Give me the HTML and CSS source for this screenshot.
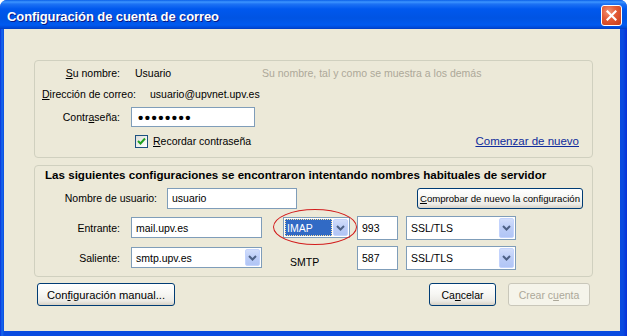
FILE: index.html
```html
<!DOCTYPE html>
<html lang="es">
<head>
<meta charset="utf-8">
<title>Configuración de cuenta de correo</title>
<link rel="stylesheet" href="styles.css">
</head>
<body>
<div class="window">
  <div class="titlebar">
    <span class="title">Configuración de cuenta de correo</span>
    <span class="close">
      <svg width="11" height="11" viewBox="0 0 11 11"><path d="M1.5 1.5 L9.5 9.5 M9.5 1.5 L1.5 9.5" stroke="#fff" stroke-width="2.2" stroke-linecap="square" fill="none"/></svg>
    </span>
  </div>
  <div class="client">
    <div class="group identity">
      <div class="row r1">
        <span class="lbl"><u>S</u>u nombre:</span>
        <span class="val val-name">Usuario</span>
        <span class="hint">Su nombre, tal y como se muestra a los demás</span>
      </div>
      <div class="row r2">
        <span class="lbl-auto"><u>D</u>irección de correo:</span>
        <span class="val val-mail">usuario@upvnet.upv.es</span>
      </div>
      <div class="row r3">
        <span class="lbl">Contr<u>a</u>seña:</span>
        <span class="field pass">••••••••</span>
      </div>
      <div class="row r4">
        <span class="check">
          <svg width="9" height="9" viewBox="0 0 9 9"><path d="M1 4 L3.5 6.5 L8 1.5" stroke="#21A121" stroke-width="2" fill="none"/></svg>
        </span>
        <span class="check-lbl"><u>R</u>ecordar contraseña</span>
        <span class="link">Comenzar de nuevo</span>
      </div>
    </div>

    <div class="group servers">
      <div class="heading">Las siguientes configuraciones se encontraron intentando nombres habituales de servidor</div>
      <div class="row user">
        <span class="lbl-user">Nombre de usuario:</span>
        <span class="field user-field">usuario</span>
        <span class="btn recheck"><u>C</u>omprobar de nuevo la configuración</span>
      </div>
      <div class="srv-grid">
        <span class="glbl">Entrante:</span>
        <span class="field host">mail.upv.es</span>
        <span class="combo proto">
          <span class="txt"><span class="sel">IMAP</span></span>
          <span class="arr"><svg width="9" height="6" viewBox="0 0 9 6"><path d="M1 1 L4.5 4.5 L8 1" stroke="#4D6185" stroke-width="2" fill="none"/></svg></span>
          <span class="ring"></span>
        </span>
        <span class="field port">993</span>
        <span class="combo ssl">
          <span class="txt">SSL/TLS</span>
          <span class="arr"><svg width="9" height="6" viewBox="0 0 9 6"><path d="M1 1 L4.5 4.5 L8 1" stroke="#4D6185" stroke-width="2" fill="none"/></svg></span>
        </span>

        <span class="glbl">Saliente:</span>
        <span class="combo host">
          <span class="txt">smtp.upv.es</span>
          <span class="arr"><svg width="9" height="6" viewBox="0 0 9 6"><path d="M1 1 L4.5 4.5 L8 1" stroke="#4D6185" stroke-width="2" fill="none"/></svg></span>
        </span>
        <span class="smtp">SMTP</span>
        <span class="field port">587</span>
        <span class="combo ssl">
          <span class="txt">SSL/TLS</span>
          <span class="arr"><svg width="9" height="6" viewBox="0 0 9 6"><path d="M1 1 L4.5 4.5 L8 1" stroke="#4D6185" stroke-width="2" fill="none"/></svg></span>
        </span>
      </div>
    </div>

    <div class="buttons">
      <span class="btn manual">Con<u>f</u>iguración manual...</span>
      <span class="btn cancel">Ca<u>n</u>celar</span>
      <span class="btn create disabled">Crear c<u>u</u>enta</span>
    </div>
  </div>
</div>
</body>
</html>
```

FILE: styles.css
```css
html, body {
  margin: 0;
  padding: 0;
}

body {
  width: 627px;
  height: 336px;
  overflow: hidden;
  background: #ffffff;
  font-family: "Liberation Sans", Arial, sans-serif;
  font-size: 10.5px;
  color: #000;
}

u {
  text-decoration: underline;
}

.window {
  width: 627px;
  height: 336px;
  box-sizing: border-box;
  display: flex;
  flex-direction: column;
  background: linear-gradient(to right, #0831D9 0, #166AEE 2px, #0A4BE0 4px, #0A4BE0 620px, #0A4BE0 623px, #0831D9 627px);
  border-radius: 7px 7px 0 0;
}

.titlebar {
  height: 29px;
  flex: none;
  box-sizing: border-box;
  display: flex;
  align-items: center;
  padding: 0 5px 0 7px;
  border-radius: 7px 7px 0 0;
  background: linear-gradient(to bottom, #0A5FE8 0px, #3D95FF 2px, #1D72F4 4px, #0058EE 9px, #0054E3 18px, #005AF0 25px, #0047D4 28px, #003DC0 29px);
}

.title {
  flex: 1;
  color: #ffffff;
  font-weight: bold;
  font-size: 13px;
  padding-top: 3px;
  text-shadow: 1px 1px 0 #0A1883;
  letter-spacing: -0.1px;
}

.close {
  width: 21px;
  height: 21px;
  box-sizing: border-box;
  border: 1px solid #ffffff;
  border-radius: 3px;
  background: radial-gradient(circle at 35% 30%, #F19577 0, #E45D38 40%, #C63A17 100%);
  display: flex;
  align-items: center;
  justify-content: center;
  margin-top: 1px;
}

.client {
  flex: 1;
  margin: 0 7px 5px 4px;
  background: #ECE9D8;
  padding: 31px 27px 0 30px;
}

.group {
  border: 1px solid #D0D0BF;
  border-radius: 4px;
}

.identity {
  padding: 2px 13px 4px 7px;
}

.row {
  display: flex;
  align-items: center;
}

.r1 { height: 20px; }
.r2 { height: 22px; }
.r3 { height: 24px; }
.r4 { height: 24px; }

.lbl {
  width: 78px;
  flex: none;
  text-align: right;
}

.lbl-auto {
  flex: none;
}

.val-name {
  width: 127px;
  margin-left: 15px;
  flex: none;
}

.val-mail {
  margin-left: 14px;
}

.hint {
  color: #ACA899;
}

.field {
  box-sizing: border-box;
  border: 1px solid #7F9DB9;
  background: #ffffff;
  display: flex;
  align-items: center;
  padding-left: 4px;
}

.pass {
  width: 124px;
  height: 20px;
  margin-left: 11px;
  padding-left: 6px;
  font-size: 15px;
  font-weight: bold;
  letter-spacing: 1.5px;
  line-height: 1;
}

.check {
  width: 13px;
  height: 13px;
  box-sizing: border-box;
  border: 1px solid #1C5180;
  background: linear-gradient(135deg, #DCDCD7 0, #F6F6F4 70%, #ffffff 100%);
  margin-left: 93px;
  display: flex;
  align-items: center;
  justify-content: center;
}

.check-lbl {
  margin-left: 5px;
}

.link {
  margin-left: auto;
  color: #102C9C;
  text-decoration: underline;
  font-size: 11.5px;
}

.servers {
  margin-top: 7px;
  padding: 2px 9px 6px 7px;
}

.heading {
  font-weight: bold;
  font-size: 11.6px;
  line-height: 14px;
  margin-bottom: 4px;
  padding-left: 3px;
  white-space: nowrap;
}

.user {
  height: 24px;
}

.lbl-user {
  width: 115px;
  flex: none;
  text-align: right;
}

.user-field {
  width: 130px;
  height: 21px;
  margin-left: 10px;
}

.btn {
  box-sizing: border-box;
  height: 23px;
  border: 1px solid #003C74;
  border-radius: 3px;
  background: linear-gradient(to bottom, #FFFFFF 0, #F7F7F4 45%, #ECEBE6 80%, #D8D2C6 100%);
  display: flex;
  align-items: center;
  justify-content: center;
  flex: none;
  white-space: nowrap;
}

.recheck {
  margin-left: auto;
  width: 166px;
  height: 21px;
  font-size: 9.6px;
}

.srv-grid {
  margin-top: 5px;
  display: grid;
  grid-template-columns: 89px 152px 74px 49px 110px;
  grid-auto-rows: 25px;
  row-gap: 5px;
  align-items: center;
}

.glbl {
  text-align: right;
  padding-right: 11px;
}

.host {
  width: 131px;
  height: 21px;
}

.port {
  width: 41px;
  height: 24px;
}

.combo {
  box-sizing: border-box;
  border: 1px solid #7F9DB9;
  background: #ffffff;
  display: flex;
  align-items: stretch;
  position: relative;
}

.combo .txt {
  flex: 1;
  display: flex;
  align-items: center;
  padding-left: 4px;
}

.combo .arr {
  width: 15px;
  margin: 1px;
  box-sizing: border-box;
  border: 1px solid #C3D3FD;
  border-radius: 2px;
  background: linear-gradient(to bottom, #D2DEFB 0, #BCCDF7 50%, #B1C5F5 100%);
  display: flex;
  align-items: center;
  justify-content: center;
}

.proto {
  width: 67px;
  height: 21px;
}

.proto .txt {
  padding: 1px 0 1px 1px;
}

.sel {
  flex: 1;
  align-self: stretch;
  display: flex;
  align-items: center;
  padding-left: 2px;
  background: #316AC5;
  color: #ffffff;
  outline: 1px dotted #FFE39E;
  outline-offset: -1px;
}

.ring {
  position: absolute;
  left: -11px;
  top: -9px;
  width: 84px;
  height: 36px;
  box-sizing: border-box;
  border: 1px solid #D21C1C;
  border-radius: 50%;
}

.ssl {
  width: 110px;
  height: 24px;
}

.smtp {
  align-self: end;
  padding-left: 7px;
  margin-bottom: 2px;
}

.buttons {
  margin-top: 6px;
  padding: 0 3px;
  display: flex;
}

.manual {
  width: 138px;
  font-size: 11.2px;
}

.cancel {
  width: 67px;
  margin-left: auto;
}

.create {
  width: 82px;
  margin-left: 12px;
}

.disabled {
  border-color: #C9C7BA;
  background: #F5F4EA;
  color: #ACA899;
}
```
